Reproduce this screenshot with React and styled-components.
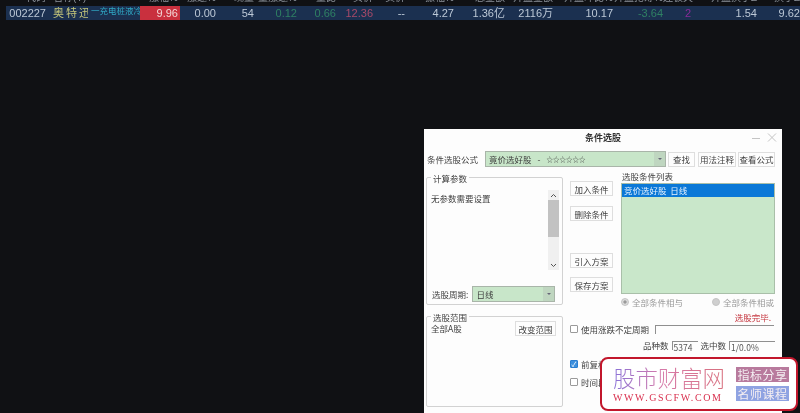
import React from "react";
import styled, { createGlobalStyle } from "styled-components";

const Global = createGlobalStyle`
  html, body { margin: 0; padding: 0; background: #101114; }
  body { width: 800px; height: 413px; overflow: hidden; font-family: "Noto Sans CJK SC", "Liberation Sans", sans-serif; }
`;
const Page = styled.div`
  position: relative; width: 800px; height: 413px; overflow: hidden; background: #101114; filter: blur(0.4px);
`;
const Table = styled.div`display: flex; flex-direction: column; padding-left: 6px;`;
const Head = styled.div`
  display: flex; height: 6px; overflow: hidden; align-items: flex-end;
`;
const Row = styled.div`display: flex; height: 14px; align-items: center; background: #1b3050; width: 794px;`;
const Cell = styled.div`
  flex: none; box-sizing: border-box; width: ${p => p.$w}px; height: 14px; line-height: 14px; white-space: nowrap; overflow: hidden;
  text-align: ${p => p.$left ? "left" : "right"};
  padding-right: ${p => p.$pr || 0}px;
  font-size: 11px; font-family: "Liberation Sans", "Noto Sans CJK SC", sans-serif; color: ${p => p.$c || "#bcc8d6"};
  background: ${p => p.$bg || "transparent"};
  letter-spacing: ${p => p.$ls || 0}px;
`;
const HeadCell = styled(Cell)`
  height: 12px; line-height: 12px; margin-top: -6px; color: #8d939b; font-size: 10px; overflow: visible; transform: translateY(-2px);
`;
const Concept = styled(Cell)`
  font-size: 8.5px; color: #2fa7c4; font-family: "Noto Sans CJK SC", sans-serif; line-height: 9px; padding-left: 3px;
`;

const Win = styled.div`
  position: absolute; left: 424px; top: 129px; width: 358px; height: 284px; background: #fdfdfd; color: #3f3f3f;
  display: flex; flex-direction: column; font-size: 8.5px; line-height: 12px;
`;
const TitleBar = styled.div`
  position: relative; height: 17px; display: flex; align-items: center; justify-content: center; font-weight: 700; font-size: 9px; color: #333;
`;
const WinCtl = styled.div`
  position: absolute; right: 4px; top: 3px; display: flex; gap: 4px; align-items: center;
`;
const FormulaRow = styled.div`display: flex; align-items: center; height: 16px; margin-top: 5px; padding-left: 3px;`;
const FormulaLabel = styled.span`width: 58px; flex: none; white-space: nowrap;`;
const Select = styled.div`
  box-sizing: border-box; display: flex; align-items: center; justify-content: space-between; width: ${p => p.$w}px; height: ${p => p.$h}px;
  background: #c8e6c9; border: 1px solid #a9b5a9; padding-left: 3px; white-space: nowrap; flex: none;
`;
const Stars = styled.span`font-size: 6.5px; letter-spacing: 0;`;
const SelectText = styled.span`display: flex; align-items: center; gap: 6px;`;
const Arrow = styled.span`
  width: 11px; align-self: stretch; background: #bfd6c0; display: flex; align-items: center; justify-content: center;
  &::after { content: ""; border: 2px solid transparent; border-top: 2.5px solid #667; margin-top: 2px; }
`;
const Btn = styled.div`
  box-sizing: border-box; display: flex; align-items: center; justify-content: center; width: ${p => p.$w}px; height: ${p => p.$h || 15}px;
  background: #fdfdfd; border: 1px solid #dedede; white-space: nowrap; flex: none; margin-left: ${p => p.$ml || 0}px; margin-top: ${p => p.$mt || 0}px;
`;
const Body = styled.div`display: flex; padding-left: 2px; margin-top: 10px;`;
const LeftCol = styled.div`width: 137px; flex: none; display: flex; flex-direction: column;`;
const Group = styled.div`
  position: relative; box-sizing: border-box; display: flex; flex-direction: column; width: 137px; height: ${p => p.$h}px; margin-top: ${p => p.$mt || 0}px; border: 1px solid #d2d2d2; border-radius: 2px;
`;
const Legend = styled.span`
  position: absolute; left: 4px; top: -5px; background: #fdfdfd; padding: 0 2px; font-size: 8.5px; line-height: 10px;
`;
const Params = styled.div`display: flex; flex: 1; box-sizing: border-box; padding: 12px 2px 0 4px;`;
const ParamText = styled.div`flex: 1; padding-top: 2px;`;
const Scroll = styled.div`
  width: 11px; height: 80px; background: #f0f0f0; display: flex; flex-direction: column; color: #555; font-size: 7px; margin-right: 1px;
`;
const ScrollEnd = styled.div`height: 10px; display: flex; align-items: center; justify-content: center;`;
const Thumb = styled.div`height: 37px; background: #c2c2c2;`;
const ScrollGap = styled.div`flex: 1;`;
const PeriodRow = styled.div`display: flex; align-items: center; gap: 4px; margin: 0 0 2px 5px;`;
const RangeBody = styled.div`display: flex; justify-content: space-between; padding: 4px 6px 0 4px;`;
const RangeName = styled.span`margin-top: 1px;`;
const RightCol = styled.div`flex: 1; display: flex; flex-direction: column; margin-left: 7px;`;
const TopSplit = styled.div`display: flex; height: 116px;`;
const BtnCol = styled.div`width: 43px; flex: none; display: flex; flex-direction: column; padding-top: 4px;`;
const ListCol = styled.div`margin-left: 8px; width: 154px; margin-top: -7px;`;
const ListLabel = styled.div`height: 12px; line-height: 12px; margin-left: 1px; margin-bottom: 1px;`;
const List = styled.div`
  box-sizing: border-box; height: 111px; background: #c9e7ca; border: 1px solid #a9bfa9;
`;
const ListSel = styled.div`height: 13px; line-height: 13px; background: #0a78d7; color: #e6f2ff; padding-left: 2px; white-space: pre;`;
const Radios = styled.div`display: flex; margin: 3px 0 0 51px; height: 12px; color: #9a9a9a; align-items: center; white-space: nowrap;`;
const Radio = styled.span`
  width: 8px; height: 8px; border-radius: 50%; background: ${p => p.$on ? "radial-gradient(#9a9a9a 35%, #dcdcdc 40%)" : "#cfcfcf"}; border: 1px solid #c4c4c4; box-sizing: border-box; margin-right: 3px; flex: none;
`;
const RadioItem = styled.div`display: flex; align-items: center; width: ${p => p.$w}px;`;
const Done = styled.div`text-align: right; color: #c4333c; width: 201px; height: 12px; margin-top: 3px;`;
const CheckRow = styled.div`display: flex; align-items: center; height: 12px; margin-top: ${p => p.$mt || 0}px; white-space: nowrap;`;
const Check = styled.span`
  box-sizing: border-box; width: 8px; height: 8px; border: 1px solid ${p => p.$on ? "#2b7ed0" : "#9a9a9a"}; background: ${p => p.$on ? "#3d8fdd" : "#fff"}; border-radius: 1px; margin-right: 3px; flex: none;
  display: flex; align-items: center; justify-content: center; color: #fff; font-size: 7px; line-height: 7px;
`;
const LineInput = styled.div`
  box-sizing: border-box; width: ${p => p.$w}px; height: ${p => p.$h || 9}px; border-top: 1px solid #8f8f8f; border-left: 1px solid #8f8f8f; line-height: 10px; padding-left: 1px; color: #555; flex: none; white-space: nowrap; font-size: 8.5px; margin-left: ${p => p.$ml || 0}px;
`;
const StatRow = styled.div`display: flex; align-items: center; margin: 4px 0 0 73px; height: 12px; white-space: nowrap; gap: 3px;`;

const Mark = styled.div`
  position: absolute; left: 600px; top: 357px; box-sizing: border-box; width: 198px; height: 54px; background: #fff; border: 2px solid #c2172c; border-radius: 8px;
  display: flex; align-items: center; padding-left: 11px; gap: 11px;
`;
const MarkText = styled.div`display: flex; flex-direction: column; width: 112px;`;
const MarkTitle = styled.div`
  font-size: 22.4px; line-height: 25px; font-weight: 300; white-space: nowrap; color: transparent;
  background: linear-gradient(90deg, #8a72d8, #d77aa8 45%, #d8707e); -webkit-background-clip: text; background-clip: text;
`;
const MarkUrl = styled.div`
  font-family: "Liberation Serif", serif; font-size: 10px; line-height: 12px; color: #d9314f; letter-spacing: 1.6px; margin-top: 2px; white-space: nowrap;
`;
const Tags = styled.div`display: flex; flex-direction: column; gap: 4px;`;
const Tag = styled.div`
  width: 53px; height: 15px; line-height: 15px; text-align: center; font-size: 12px; letter-spacing: 0.5px; color: #f4eef2; background: ${p => p.$bg}; white-space: nowrap;
`;

const cols = [
  { w: 47, h: "代码", v: "002227", pr: 7 },
  { w: 35, h: "名称(Y)", v: "奥特迅", c: "#c6c77a", left: 1, ls: 2 },
  { w: 52, h: "", v: "" },
  { w: 40, h: "涨幅%", v: "9.96", c: "#f2d6d6", bg: "#c9303e", pr: 2 },
  { w: 36, h: "涨速%", v: "0.00" },
  { w: 38, h: "现量", v: "54" },
  { w: 43, h: "量涨速%", v: "0.12", c: "#2f8063" },
  { w: 39, h: "量比", v: "0.66", c: "#2f8063" },
  { w: 37, h: "买价", v: "12.36", c: "#a84a68" },
  { w: 32, h: "卖价", v: "--" },
  { w: 49, h: "振幅%", v: "4.27" },
  { w: 51, h: "总金额", v: "1.36亿" },
  { w: 48, h: "开盘金额", v: "2116万" },
  { w: 60, h: "开盘昨比%", v: "10.17" },
  { w: 50, h: "开盘抢筹%", v: "-3.64", c: "#2f8063" },
  { w: 28, h: "连板天", v: "2", c: "#8a2a9a" },
  { w: 66, h: "开盘换手Z", v: "1.54" },
  { w: 43, h: "换手Z", v: "9.62" },
];

export default function App() {
  return (
    <Page>
      <Global />
      <Table>
        <Head>
          {cols.map((c, i) => (
            <HeadCell key={i} $w={c.w} $left={c.left} $pr={c.pr}>{c.h}</HeadCell>
          ))}
        </Head>
        <Row>
          {cols.map((c, i) =>
            i === 2 ? (
              <Concept key={i} $w={c.w} $left>一充电桩液冷超充</Concept>
            ) : (
              <Cell key={i} $w={c.w} $c={c.c} $bg={c.bg} $left={c.left} $ls={c.ls} $pr={c.pr}>{c.v}</Cell>
            )
          )}
        </Row>
      </Table>

      <Win>
        <TitleBar>
          条件选股
          <WinCtl>
            <svg width="26" height="12" viewBox="0 0 26 12">
              <path d="M0 6.5h8" stroke="#c4c4c4" strokeWidth="1" />
              <path d="M16 1.5l8 8M24 1.5l-8 8" stroke="#c4c4c4" strokeWidth="1" fill="none" />
            </svg>
          </WinCtl>
        </TitleBar>
        <FormulaRow>
          <FormulaLabel>条件选股公式</FormulaLabel>
          <Select $w={181} $h={16}>
            <SelectText>竟价选好股<span>-</span><Stars>☆☆☆☆☆☆</Stars></SelectText>
            <Arrow />
          </Select>
          <Btn $w={27} $ml={2}>查找</Btn>
          <Btn $w={38} $ml={3}>用法注释</Btn>
          <Btn $w={37} $ml={2}>查看公式</Btn>
        </FormulaRow>
        <Body>
          <LeftCol>
            <Group $h={128}>
              <Legend>计算参数</Legend>
              <Params>
                <ParamText>无参数需要设置</ParamText>
                <Scroll>
                  <ScrollEnd>
                    <svg width="7" height="5" viewBox="0 0 7 5"><path d="M1 4l2.5-2.5L6 4" stroke="#555" fill="none" /></svg>
                  </ScrollEnd>
                  <Thumb />
                  <ScrollGap />
                  <ScrollEnd>
                    <svg width="7" height="5" viewBox="0 0 7 5"><path d="M1 1l2.5 2.5L6 1" stroke="#555" fill="none" /></svg>
                  </ScrollEnd>
                </Scroll>
              </Params>
              <PeriodRow>
                <span>选股周期:</span>
                <Select $w={83} $h={16}>日线<Arrow /></Select>
              </PeriodRow>
            </Group>
            <Group $h={91} $mt={11}>
              <Legend>选股范围</Legend>
              <RangeBody>
                <RangeName>全部A股</RangeName>
                <Btn $w={41} $h={15}>改变范围</Btn>
              </RangeBody>
            </Group>
          </LeftCol>
          <RightCol>
            <TopSplit>
              <BtnCol>
                <Btn $w={43}>加入条件</Btn>
                <Btn $w={43} $mt={10}>删除条件</Btn>
                <Btn $w={43} $mt={32}>引入方案</Btn>
                <Btn $w={43} $mt={9}>保存方案</Btn>
              </BtnCol>
              <ListCol>
                <ListLabel>选股条件列表</ListLabel>
                <List>
                  <ListSel>竞价选好股  日线</ListSel>
                </List>
              </ListCol>
            </TopSplit>
            <Radios>
              <RadioItem $w={91}><Radio $on />全部条件相与</RadioItem>
              <RadioItem $w={70}><Radio />全部条件相或</RadioItem>
            </Radios>
            <Done>选股完毕.</Done>
            <CheckRow $mt={0}>
              <Check />使用涨跌不定周期
              <LineInput $w={119} $ml={6} />
            </CheckRow>
            <StatRow>
              品种数<LineInput $w={26}>5374</LineInput>
              <span>选中数</span><LineInput $w={46}>1/0.0%</LineInput>
            </StatRow>
            <CheckRow $mt={7}><Check $on>✓</Check>前复权数据</CheckRow>
            <CheckRow $mt={6}><Check />时间段内满足条件</CheckRow>
          </RightCol>
        </Body>
      </Win>

      <Mark>
        <MarkText>
          <MarkTitle>股市财富网</MarkTitle>
          <MarkUrl>WWW.GSCFW.COM</MarkUrl>
        </MarkText>
        <Tags>
          <Tag $bg="#b87a9d">指标分享</Tag>
          <Tag $bg="#8fa3e2">名师课程</Tag>
        </Tags>
      </Mark>
    </Page>
  );
}
